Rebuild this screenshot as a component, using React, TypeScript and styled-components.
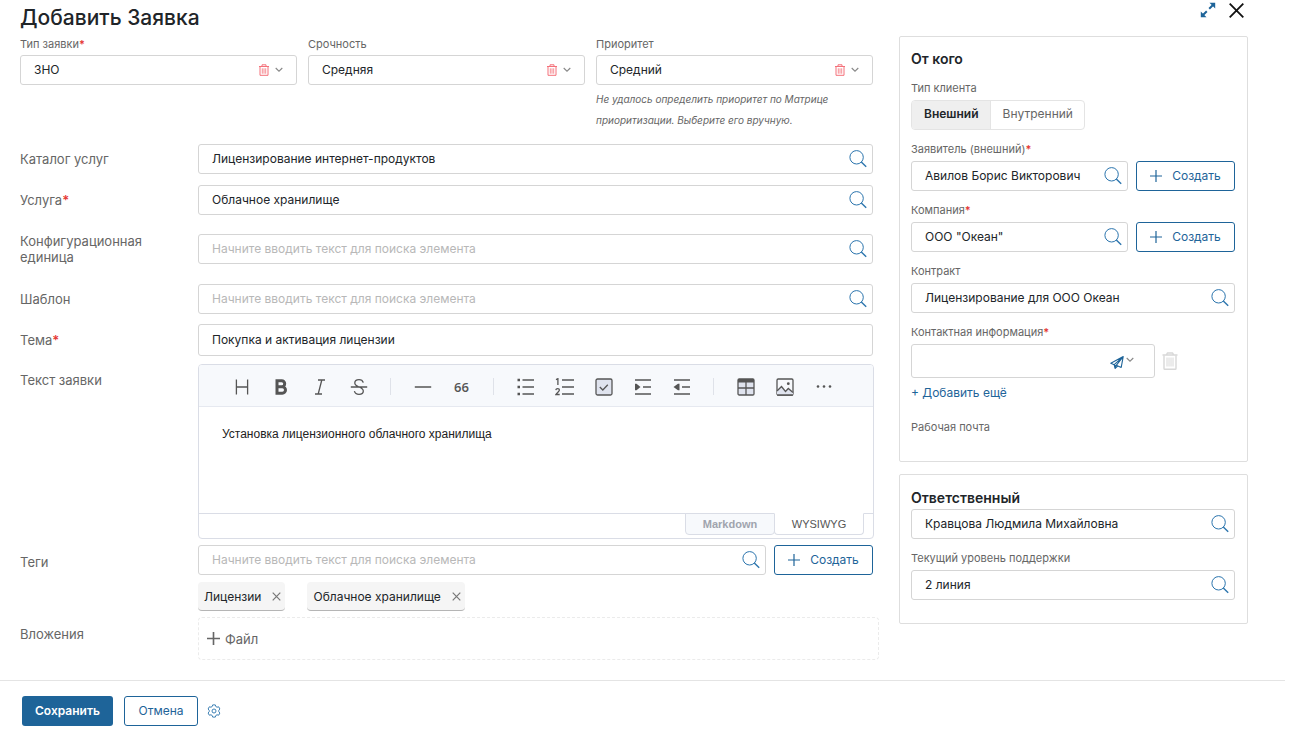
import React, { useId, useState } from 'react';
import styled, { createGlobalStyle, css } from 'styled-components';

const color = {
  text: '#212529',
  label: '#666666',
  border: '#d5d5d5',
  blue: '#1e6499',
  red: '#e53935',
  trash: '#f4717a',
  placeholder: '#b8b8b8',
  editorBorder: '#dadde6',
  toolbar: '#f7f9fc',
  icon: '#555555',
};

const GlobalStyle = createGlobalStyle`
  *, *::before, *::after { box-sizing: border-box; }
  body {
    margin: 0;
    background: #fff;
    color: ${color.text};
    font-family: Inter, Roboto, sans-serif;
    font-size: 12px;
  }
  button, input, select, textarea { font: inherit; color: inherit; }
  button { cursor: pointer; }
`;

const Dialog = styled.main`
  display: flex;
  flex-direction: column;
`;

const Header = styled.header`
  display: flex;
  justify-content: space-between;
  align-items: flex-start;
  height: 36px;
  padding: 0 47px 0 20px;
`;

const Title = styled.h1`
  margin: 5px 0 0;
  font-size: 21px;
  line-height: 26px;
  font-weight: 500;
`;

const HeaderActions = styled.div`
  display: flex;
  gap: 13px;
  padding-top: 2px;
`;

const IconButton = styled.button<{ $tone?: string }>`
  display: inline-flex;
  align-items: center;
  justify-content: center;
  flex: none;
  padding: 0;
  border: 0;
  background: none;
  color: ${(p) => p.$tone ?? color.blue};
  svg { display: block; }
`;

const Content = styled.div`
  display: grid;
  grid-template-columns: minmax(0, 1fr) 349px;
  gap: 26px;
  align-items: start;
  padding: 0 43px 0 20px;
`;

const FieldBlock = styled.div`
  display: flex;
  flex-direction: column;
  gap: 4px;
`;

const TopFields = styled.div`
  display: grid;
  grid-template-columns: repeat(3, minmax(0, 1fr));
  align-items: start;
  gap: 11px;
  margin-bottom: 13px;
`;

const TopField = styled(FieldBlock)`
  gap: 3px;
  padding-top: 1px;
`;

const SmallLabel = styled.label`
  font-size: 11px;
  line-height: 15px;
  color: ${color.label};
`;

const Star = styled.span`
  color: ${color.red};
  font-weight: 600;
`;

const Hint = styled.p`
  margin: 1px 0 0;
  font-size: 10px;
  line-height: 21px;
  font-style: italic;
  color: ${color.label};
`;

const Box = styled.div<{ $height?: number }>`
  display: flex;
  align-items: center;
  flex: 1 1 0;
  min-width: 0;
  height: ${(p) => p.$height ?? 30}px;
  min-height: ${(p) => p.$height ?? 30}px;
  padding: 0 5px 1px 13px;
  border: 1px solid ${color.border};
  border-radius: 3px;
  background: #fff;
`;

const bare = css`
  flex: 1;
  min-width: 0;
  height: 100%;
  padding: 0;
  border: 0;
  outline: 0;
  background: transparent;
`;

const TextInput = styled.input`
  ${bare}
  &::placeholder { color: ${color.placeholder}; opacity: 1; }
`;

const Select = styled.select`
  ${bare}
  appearance: none;
`;

const SelectIcons = styled.span`
  display: flex;
  align-items: center;
  gap: 6px;
  padding-right: 8px;
`;

const FormRow = styled.div<{ $tall?: boolean; $top?: number; $before?: number }>`
  display: grid;
  grid-template-columns: 178px minmax(0, 1fr);
  align-items: ${(p) => (p.$top === undefined ? 'center' : 'start')};
  margin-top: ${(p) => p.$before ?? 10}px;
  padding: ${(p) => (p.$tall ? 9 : 0)}px 0;
  & > label, & > span { padding-top: ${(p) => p.$top ?? 0}px; }
`;

const RowLabel = styled.label`
  padding-right: 40px;
  font-size: 13px;
  line-height: 16px;
  color: ${color.label};
`;

const Inline = styled.div`
  display: flex;
  gap: 8px;
`;

const OutlineButton = styled.button`
  display: inline-flex;
  align-items: center;
  justify-content: center;
  gap: 10px;
  flex: none;
  min-width: 99px;
  height: 30px;
  padding: 0 12px 1px;
  border: 1px solid ${color.blue};
  border-radius: 3px;
  background: #fff;
  color: ${color.blue};
`;

const Editor = styled.div`
  margin-right: -1px;
  border: 1px solid ${color.editorBorder};
  border-radius: 4px;
  overflow: hidden;
`;

const Toolbar = styled.div`
  display: flex;
  align-items: center;
  height: 42px;
  padding: 2px 0 0 23px;
  border-bottom: 1px solid #e6e9f0;
  background: ${color.toolbar};
`;

const ToolButton = styled.button`
  display: flex;
  align-items: center;
  justify-content: center;
  width: 39px;
  height: 32px;
  padding: 0;
  border: 0;
  background: none;
  color: ${color.icon};
  font: 600 13px 'Open Sans', sans-serif;
`;

const ToolDivider = styled.span`
  width: 1px;
  height: 17px;
  margin: 0 12px;
  background: #dfe2e9;
`;

const EditorText = styled.textarea`
  display: block;
  width: 100%;
  height: 106px;
  padding: 18px 23px;
  border: 0;
  outline: 0;
  resize: none;
  font: 12px/18px 'Liberation Sans', sans-serif;
  color: #222;
`;

const EditorTabs = styled.div`
  display: flex;
  justify-content: flex-end;
  height: 25px;
  padding-right: 9px;
  background: linear-gradient(${color.editorBorder}, ${color.editorBorder}) top / 100% 1px no-repeat;
`;

const EditorTab = styled.button<{ $active?: boolean }>`
  width: 90px;
  height: 22px;
  padding: 0;
  border: 1px solid ${color.editorBorder};
  border-radius: 0 0 4px 4px;
  border-top-color: ${(p) => (p.$active ? '#fff' : color.editorBorder)};
  background: ${(p) => (p.$active ? '#fff' : color.toolbar)};
  color: ${(p) => (p.$active ? '#555' : '#a0a4ae')};
  font: ${(p) => (p.$active ? 400 : 700)} 11px 'Liberation Sans', sans-serif;
  & + & { margin-left: -1px; }
`;

const Chips = styled.div`
  display: flex;
  flex-wrap: wrap;
  gap: 22px;
  margin-top: 7px;
`;

const Chip = styled.span`
  display: inline-flex;
  align-items: center;
  gap: 11px;
  height: 29px;
  padding: 0 4px 0 6px;
  border-bottom: 1px solid #b5b5b5;
  border-radius: 4px;
  background: #f5f5f5;
`;

const DropZone = styled.div`
  display: flex;
  align-items: center;
  height: 43px;
  margin-right: -6px;
  padding-left: 8px;
  border: 1px dashed #ebebeb;
  border-radius: 4px;
`;

const FileButton = styled.button`
  display: inline-flex;
  align-items: center;
  gap: 5px;
  padding: 0;
  border: 0;
  background: none;
  font-size: 13px;
  line-height: 16px;
  color: ${color.label};
`;

const Side = styled.aside`
  display: flex;
  flex-direction: column;
  gap: 12px;
`;

const Card = styled.section`
  display: flex;
  flex-direction: column;
  gap: 12px;
  padding: 12px 12px 26px 11px;
  border: 1px solid #dedede;
  border-radius: 2px;
`;

const OwnerCard = styled(Card)`
  padding: 13px 12px 23px 11px;
`;

const CardTitle = styled.h2`
  margin: 0;
  font-size: 14px;
  line-height: 20px;
  font-weight: 600;
`;

const Segments = styled.div`
  display: flex;
  align-self: flex-start;
  height: 30px;
  border: 1px solid #e4e4e4;
  border-radius: 4px;
  overflow: hidden;
`;

const Segment = styled.label`
  position: relative;
  display: flex;
  align-items: center;
  padding: 0 11px 3px 12px;
  color: ${color.label};
  & + & { border-left: 1px solid #e4e4e4; }
  input { position: absolute; opacity: 0; margin: 0; }
  &:has(input:checked) {
    background: #efefef;
    color: ${color.text};
    font-weight: 600;
  }
`;

const ContactLine = styled.div`
  display: flex;
  align-items: center;
  gap: 7px;
  padding-right: 57px;
`;

const ContactType = styled(IconButton)`
  gap: 2px;
  margin-right: 15px;
  padding-top: 3px;
  & > svg + svg { margin-bottom: 4px; }
`;

const OwnerField = styled.div`
  display: flex;
  margin-top: -3px;
`;

const WorkMail = styled(SmallLabel).attrs({ as: 'span' })`
  margin-top: 7px;
`;

const AddLink = styled.a`
  margin-top: 3px;
  font-size: 12px;
  line-height: 16px;
  color: ${color.blue};
  text-decoration: none;
`;

const Footer = styled.footer`
  display: flex;
  align-items: center;
  margin: 20px 6px 0 0;
  padding: 15px 22px 4px;
  border-top: 1px solid #e4e4e4;
`;

const PrimaryButton = styled.button`
  height: 30px;
  min-width: 91px;
  margin-right: 11px;
  padding: 0 12px 1px;
  border: 0;
  border-radius: 3px;
  background: ${color.blue};
  color: #fff;
  font-weight: 600;
`;

const CancelButton = styled(OutlineButton)`
  min-width: 74px;
  margin-right: 9px;
`;

const SearchIcon = () => (
  <svg width="18" height="18" viewBox="0 0 18 18" fill="none" stroke="#2a74ad" strokeWidth="1">
    <circle cx="7.6" cy="7.3" r="6.7" />
    <path d="M12.3 12.1l4.9 4.6" strokeWidth="1.4" />
  </svg>
);

const TrashIcon = () => (
  <svg width="10" height="12" viewBox="0 0 10 12" fill="none" stroke="currentColor">
    <path d="M0 2.5h10M3 2V.8h4V2" />
    <path d="M1 2.5v8.8h8V2.5" />
    <path d="M3.3 4.3v5.4M5 4.3v5.4M6.7 4.3v5.4" strokeWidth=".8" />
  </svg>
);

const LargeTrashIcon = () => (
  <svg width="16" height="18" viewBox="0 0 16 18" fill="none" stroke="currentColor" strokeWidth="1.4">
    <path d="M.5 3h15M4.5 2.7L5.5 1h5l1 1.7" />
    <path d="M2 3.5v13q0 .8.8.8h10.4q.8 0 .8-.8v-13" />
    <path d="M5 5.5v9M7 5.5v9M9 5.5v9M11 5.5v9" strokeWidth="1" />
  </svg>
);

const ChevronIcon = () => (
  <svg width="8" height="6" viewBox="0 0 8 6" fill="none" stroke="#888" strokeWidth="1.1">
    <path d="M.7 1l3.3 3.2L7.3 1" />
  </svg>
);

const PlusIcon = ({ size = 12, weight = 1.2 }: { size?: number; weight?: number }) => (
  <svg width={size} height={size} viewBox="0 0 12 12" fill="none" stroke="currentColor" strokeWidth={weight}>
    <path d="M6 0v12M0 6h12" />
  </svg>
);

const CrossIcon = ({ size, weight }: { size: number; weight: number }) => (
  <svg width={size} height={size} viewBox={`0 0 ${size} ${size}`} stroke="currentColor" strokeWidth={weight}>
    <path d={`M.7 .7L${size - 0.7} ${size - 0.7}M${size - 0.7} .7L.7 ${size - 0.7}`} />
  </svg>
);

const ExpandIcon = () => (
  <svg width="16" height="16" viewBox="0 0 16 16" fill="currentColor" stroke="currentColor">
    <path d="M9.5.8h5.7v5.7zM.8 9.5v5.7h5.7z" stroke="none" />
    <path d="M13 3L9.2 6.8M6.8 9.2L3 13" strokeWidth="2" />
  </svg>
);

const PlaneIcon = () => (
  <svg width="14" height="13" viewBox="0 0 14 13" fill="none" stroke="currentColor" strokeWidth="1.1" strokeLinejoin="round">
    <path d="M13.2.6L.8 7.2l3.4 1.5L13.2.6 6.2 9.3l5 2.1z" />
    <path d="M4.2 8.7l.9 3.7 1.1-3.1" fill="currentColor" />
    <path d="M5.1 12.4l2.6-2.4" />
  </svg>
);

const GearIcon = () => (
  <svg width="14" height="14" viewBox="0 0 14 14" fill="none" stroke="#2a74ad" strokeWidth=".9" strokeLinejoin="round">
    <path d="M5.7.9h2.6l.5 1.6 1.2.7 1.7-.4 1.2 2.2-1.1 1.3v1.4l1.1 1.3-1.2 2.2-1.7-.4-1.2.7-.5 1.6H5.7l-.5-1.6-1.2-.7-1.7.4L1.1 9l1.1-1.3V6.3L1.1 5l1.2-2.2 1.7.4 1.2-.7z" />
    <circle cx="7" cy="7" r="2" />
  </svg>
);

const Tool = ({ children }: { children: React.ReactNode }) => (
  <svg width="20" height="18" viewBox="0 0 20 18" fill="none" stroke="currentColor" strokeWidth="1.3">
    {children}
  </svg>
);

const tools: Array<Array<[string, React.ReactNode]>> = [
  [
    ['Заголовок', <Tool><path d="M4.4 1.5v15M15.6 1.5v15M4.4 9h11.2" /></Tool>],
    ['Жирный', <Tool><path d="M6 2.8h4.7a2.9 2.9 0 010 6H6zM6 8.8h5.3a3.2 3.2 0 010 6.4H6z" strokeWidth="3" /></Tool>],
    ['Курсив', <Tool><path d="M8 2h7M5 16h7M11.8 2L8.2 16" /></Tool>],
    ['Зачёркнутый', <Tool><path d="M1.8 9h16.4M14.3 4.6C13.7 2.7 12.2 1.7 10 1.7c-2.4 0-4.2 1.2-4.2 3.3C5.8 7.2 7.6 8 10 9c2.5 1 4.3 1.9 4.3 4.1 0 2-1.8 3.3-4.3 3.3-2.4 0-4.1-1.2-4.6-3.2" /></Tool>],
  ],
  [
    ['Линия', <Tool><path d="M1.8 9h16.4" /></Tool>],
    ['Цитата', '66'],
  ],
  [
    ['Список', <Tool><path d="M6.5 2H18M6.5 9H18M6.5 16H18" /><path d="M1.5 2H4M1.5 9H4M1.5 16H4" strokeWidth="2.4" /></Tool>],
    ['Нумерованный список', <Tool><path d="M7 2h12M7 9h12M7 16h12" /><path d="M1 1.7L2.9.7V7M.8 12.1c.3-2.1 3.6-2 3.6 0 0 1.5-2.5 2.6-3.5 4.4h3.8" /></Tool>],
    ['Список задач', <Tool><rect x="2" y="1" width="16" height="16" rx="1.5" fill="#dfe3ee" /><path d="M5.8 9l3 3 5-5.3" /></Tool>],
    ['Увеличить отступ', <Tool><path d="M2 2h16M10 9h8M2 16h16" /><path d="M2 5.7h1.5L7.5 9l-4 3.3H2z" fill="currentColor" stroke="none" /></Tool>],
    ['Уменьшить отступ', <Tool><path d="M2 2h16M10 9h8M2 16h16" /><path d="M7.5 5.7H6L1.5 9 6 12.3h1.5z" fill="currentColor" stroke="none" /></Tool>],
  ],
  [
    ['Таблица', <Tool><rect x="2" y="1" width="16" height="16" rx="1.2" fill="#dfe3ee" /><path d="M2 2.7h16" strokeWidth="3.4" /><path d="M10 3v14M2 10h16" /></Tool>],
    ['Изображение', <Tool><rect x="2" y="1" width="16" height="16" rx="1.2" /><path d="M2 13l4.5-4.5 4 5 3-3L18 14v3H2z" fill="#dfe3ee" stroke="none" /><path d="M2 13l4.5-4.5 4 5 2.8-3L18 14.5M2 17h16" /><circle cx="13.3" cy="5.7" r="1.4" fill="currentColor" stroke="none" /></Tool>],
    ['Ещё', <Tool><g fill="currentColor" stroke="none"><circle cx="4" cy="8.5" r="1.3" /><circle cx="10" cy="8.5" r="1.3" /><circle cx="16" cy="8.5" r="1.3" /></g></Tool>],
  ],
];

const SEARCH_HINT = 'Начните вводить текст для поиска элемента';

function SearchField({ id, value = '' }: { id: string; value?: string }) {
  return (
    <Box>
      <TextInput id={id} defaultValue={value} placeholder={SEARCH_HINT} />
      <IconButton type="button" aria-label="Найти"><SearchIcon /></IconButton>
    </Box>
  );
}

function CreateButton() {
  return <OutlineButton type="button"><PlusIcon />Создать</OutlineButton>;
}

function TopSelect({ label, value, required, hint }: { label: string; value: string; required?: boolean; hint?: string }) {
  const id = useId();
  return (
    <TopField>
      <SmallLabel htmlFor={id}>{label}{required && <Star>*</Star>}</SmallLabel>
      <Box>
        <Select id={id} defaultValue={value}><option>{value}</option></Select>
        <SelectIcons>
          <IconButton type="button" $tone={color.trash} aria-label="Очистить"><TrashIcon /></IconButton>
          <ChevronIcon />
        </SelectIcons>
      </Box>
      {hint && <Hint>{hint}</Hint>}
    </TopField>
  );
}

function SearchRow({ label, value, required, tall, before }: { label: string; value?: string; required?: boolean; tall?: boolean; before?: number }) {
  const id = useId();
  return (
    <FormRow $tall={tall} $before={before}>
      <RowLabel htmlFor={id}>{label}{required && <Star>*</Star>}</RowLabel>
      <SearchField id={id} value={value} />
    </FormRow>
  );
}

function SideField({ label, value, required, create }: { label: string; value: string; required?: boolean; create?: boolean }) {
  const id = useId();
  return (
    <FieldBlock>
      <SmallLabel htmlFor={id}>{label}{required && <Star>*</Star>}</SmallLabel>
      <Inline>
        <SearchField id={id} value={value} />
        {create && <CreateButton />}
      </Inline>
    </FieldBlock>
  );
}

export default function App() {
  const [client, setClient] = useState('Внешний');
  const [tags, setTags] = useState(['Лицензии', 'Облачное хранилище']);

  return (
    <>
      <GlobalStyle />
      <Dialog>
        <Header>
          <Title>Добавить Заявка</Title>
          <HeaderActions>
            <IconButton type="button" aria-label="Развернуть"><ExpandIcon /></IconButton>
            <IconButton type="button" $tone="#111" aria-label="Закрыть"><CrossIcon size={15} weight={1.8} /></IconButton>
          </HeaderActions>
        </Header>

        <Content>
          <form>
            <TopFields>
              <TopSelect label="Тип заявки" value="ЗНО" required />
              <TopSelect label="Срочность" value="Средняя" />
              <TopSelect
                label="Приоритет"
                value="Средний"
                hint="Не удалось определить приоритет по Матрице приоритизации. Выберите его вручную."
              />
            </TopFields>

            <SearchRow label="Каталог услуг" value="Лицензирование интернет-продуктов" before={0} />
            <SearchRow label="Услуга" value="Облачное хранилище" required before={11} />
            <SearchRow label="Конфигурационная единица" tall before={9} />
            <SearchRow label="Шаблон" />

            <FormRow>
              <RowLabel htmlFor="subject">Тема<Star>*</Star></RowLabel>
              <Box $height={32}>
                <TextInput id="subject" defaultValue="Покупка и активация лицензии" />
              </Box>
            </FormRow>

            <FormRow $top={8} $before={8}>
              <RowLabel htmlFor="body">Текст заявки</RowLabel>
              <Editor>
                <Toolbar role="toolbar" aria-label="Форматирование">
                  {tools.map((group, i) => (
                    <React.Fragment key={i}>
                      {i > 0 && <ToolDivider />}
                      {group.map(([name, icon]) => (
                        <ToolButton key={name} type="button" aria-label={name}>{icon}</ToolButton>
                      ))}
                    </React.Fragment>
                  ))}
                </Toolbar>
                <EditorText id="body" defaultValue="Установка лицензионного облачного хранилища" />
                <EditorTabs role="tablist">
                  <EditorTab type="button" role="tab" aria-selected={false}>Markdown</EditorTab>
                  <EditorTab type="button" role="tab" aria-selected $active>WYSIWYG</EditorTab>
                </EditorTabs>
              </Editor>
            </FormRow>

            <FormRow $top={9} $before={6}>
              <RowLabel htmlFor="tags">Теги</RowLabel>
              <div>
                <Inline>
                  <SearchField id="tags" />
                  <CreateButton />
                </Inline>
                <Chips>
                  {tags.map((tag) => (
                    <Chip key={tag}>
                      {tag}
                      <IconButton
                        type="button"
                        $tone="#777"
                        aria-label={`Удалить ${tag}`}
                        onClick={() => setTags(tags.filter((t) => t !== tag))}
                      >
                        <CrossIcon size={9} weight={1.2} />
                      </IconButton>
                    </Chip>
                  ))}
                </Chips>
              </div>
            </FormRow>

            <FormRow $top={9} $before={6}>
              <RowLabel as="span">Вложения</RowLabel>
              <DropZone>
                <FileButton type="button"><PlusIcon size={13} weight={1.5} />Файл</FileButton>
              </DropZone>
            </FormRow>
          </form>

          <Side>
            <Card>
              <CardTitle>От кого</CardTitle>
              <FieldBlock role="radiogroup" aria-labelledby="client-type">
                <SmallLabel as="span" id="client-type">Тип клиента</SmallLabel>
                <Segments>
                  {['Внешний', 'Внутренний'].map((name) => (
                    <Segment key={name}>
                      <input type="radio" name="client" checked={client === name} onChange={() => setClient(name)} />
                      {name}
                    </Segment>
                  ))}
                </Segments>
              </FieldBlock>
              <SideField label="Заявитель (внешний)" value="Авилов Борис Викторович" required create />
              <SideField label="Компания" value={'ООО "Океан"'} required create />
              <SideField label="Контракт" value="Лицензирование для ООО Океан" />
              <FieldBlock>
                <SmallLabel htmlFor="contact">Контактная информация<Star>*</Star></SmallLabel>
                <ContactLine>
                  <Box $height={34}>
                    <TextInput id="contact" />
                    <ContactType type="button" aria-label="Тип контакта"><PlaneIcon /><ChevronIcon /></ContactType>
                  </Box>
                  <IconButton type="button" $tone="#d8d8d8" aria-label="Удалить контакт"><LargeTrashIcon /></IconButton>
                </ContactLine>
                <AddLink href="#contact">+ Добавить ещё</AddLink>
              </FieldBlock>
              <WorkMail>Рабочая почта</WorkMail>
            </Card>

            <OwnerCard>
              <FieldBlock>
                <CardTitle as="label" htmlFor="owner">Ответственный</CardTitle>
                <OwnerField><SearchField id="owner" value="Кравцова Людмила Михайловна" /></OwnerField>
              </FieldBlock>
              <SideField label="Текущий уровень поддержки" value="2 линия" />
            </OwnerCard>
          </Side>
        </Content>

        <Footer>
          <PrimaryButton type="button">Сохранить</PrimaryButton>
          <CancelButton type="button">Отмена</CancelButton>
          <IconButton type="button" aria-label="Настройки"><GearIcon /></IconButton>
        </Footer>
      </Dialog>
    </>
  );
}
